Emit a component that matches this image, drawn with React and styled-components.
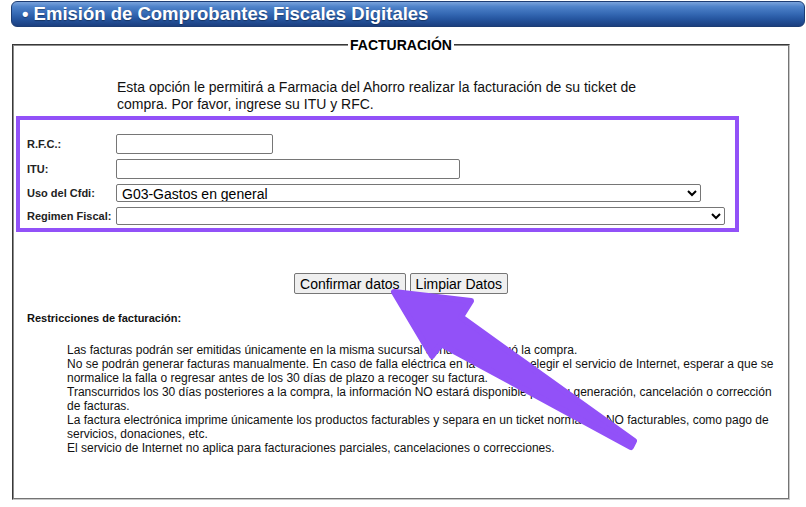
import React from 'react'
import styled, { createGlobalStyle } from 'styled-components'

const GlobalStyle = createGlobalStyle`
  body {
    margin: 0;
    background: #fff;
    font-family: "Liberation Sans", Arial, sans-serif;
    color: #000;
  }
`

const restricciones = [
  'Las facturas podrán ser emitidas únicamente en la misma sucursal donde se efectuó la compra.',
  'No se podrán generar facturas manualmente. En caso de falla eléctrica en la sucursal, elegir el servicio de Internet, esperar a que se normalice la falla o regresar antes de los 30 días de plazo a recoger su factura.',
  'Transcurridos los 30 días posteriores a la compra, la información NO estará disponible para su generación, cancelación o corrección de facturas.',
  'La factura electrónica imprime únicamente los productos facturables y separa en un ticket normal los NO facturables, como pago de servicios, donaciones, etc.',
  'El servicio de Internet no aplica para facturaciones parciales, cancelaciones o correcciones.'
]

function App() {
  return (
    <Page>
      <GlobalStyle />
      <TitleBar>• Emisión de Comprobantes Fiscales Digitales</TitleBar>

      <Box>
        <Legend>FACTURACIÓN</Legend>
        <Intro>
          Esta opción le permitirá a Farmacia del Ahorro realizar la facturación de su ticket de
          compra. Por favor, ingrese su ITU y RFC.
        </Intro>

        <Highlight>
          <Row>
            <Label>R.F.C.:</Label>
            <TextInput $w={157} type="text" />
          </Row>
          <Row>
            <Label>ITU:</Label>
            <TextInput $w={344} type="text" />
          </Row>
          <Row>
            <Label>Uso del Cfdi:</Label>
            <Select $w={585} defaultValue="G03">
              <option value="G03">G03-Gastos en general</option>
            </Select>
          </Row>
          <Row>
            <Label>Regimen Fiscal:</Label>
            <Select $w={609} defaultValue="">
              <option value=""></option>
            </Select>
          </Row>
        </Highlight>

        <Buttons>
          <Button type="button">Confirmar datos</Button>
          <Button type="button">Limpiar Datos</Button>
        </Buttons>

        <SubTitle>Restricciones de facturación:</SubTitle>
        <Rules>
          {restricciones.map((r) => (
            <Rule key={r}>{r}</Rule>
          ))}
        </Rules>
      </Box>

      <Arrow viewBox="0 0 806 507" width="806" height="507">
        <path
          d="M394 292 L471 301 L461 317 L634 441 L631 447 L441 344 L432 356 Z"
          fill="#9251f8"
          stroke="#9251f8"
          strokeWidth="6"
          strokeLinejoin="round"
        />
      </Arrow>
    </Page>
  )
}

const Page = styled.div`
  position: relative;
  width: 806px;
  height: 507px;
  overflow: hidden;
  padding-top: 1px;
  box-sizing: border-box;
`

const TitleBar = styled.div`
  margin: 0 1px 0 11px;
  height: 26px;
  box-sizing: border-box;
  border: 1px solid #1d3d74;
  border-radius: 6px;
  padding-left: 10px;
  display: flex;
  align-items: center;
  background: linear-gradient(
    to bottom,
    #7aa3dc 0%,
    #4e82c9 20%,
    #3468b3 50%,
    #2656a0 70%,
    #1b3f80 100%
  );
  color: #fff;
  font-size: 18.5px;
  font-weight: bold;
  text-shadow: 0 1px 1px rgba(0, 0, 0, 0.35);
`

const Box = styled.fieldset`
  margin: 10px 16px 0 12px;
  padding: 0 2px 43px;
  height: 463px;
  box-sizing: border-box;
  border: 2px groove #c0c0c0;
  border-color: #8c8c8c #c8c8c8 #c8c8c8 #8c8c8c;
  min-width: 0;
`

const Legend = styled.legend`
  margin: 0 auto;
  padding: 0 2px;
  font-size: 14px;
  font-weight: bold;
  line-height: 16px;
`

const Intro = styled.p`
  margin: 26px 0 0 101px;
  width: 540px;
  font-size: 14px;
  line-height: 17px;
  color: #111;
`

const Highlight = styled.div`
  margin-top: 3px;
  width: 723px;
  box-sizing: border-box;
  border: 4px solid #9251f8;
  padding: 14px 0 3px 7px;
  display: flex;
  flex-direction: column;
  gap: 5px;
`

const Row = styled.div`
  display: grid;
  grid-template-columns: 89px 1fr;
  align-items: center;
`

const Label = styled.span`
  font-size: 11px;
  font-weight: bold;
  color: #222;
`

const TextInput = styled.input`
  width: ${(p) => p.$w}px;
  height: 20px;
  box-sizing: border-box;
  border: 1px solid #767676;
  border-radius: 2px;
  padding: 1px 2px;
  font-family: "Liberation Sans", Arial, sans-serif;
  font-size: 13px;
`

const Select = styled.select`
  width: ${(p) => p.$w}px;
  height: 18px;
  box-sizing: border-box;
  border: 1px solid #767676;
  border-radius: 2px;
  padding: 0 1px;
  background: #fff;
  color: #000;
  font-family: "Liberation Sans", Arial, sans-serif;
  font-size: 14px;
`

const Buttons = styled.div`
  margin-top: 41px;
  display: flex;
  justify-content: center;
  gap: 4px;
`

const Button = styled.button`
  height: 21px;
  padding: 1px 5px;
  border: 1px solid #767676;
  border-radius: 2px;
  background: #efefef;
  color: #000;
  font-family: "Liberation Sans", Arial, sans-serif;
  font-size: 14px;
`

const SubTitle = styled.div`
  margin: 17px 0 0 11px;
  font-size: 11px;
  font-weight: bold;
  line-height: 14px;
  color: #111;
`

const Rules = styled.div`
  margin: 18px 0 0 51px;
  width: 712px;
  font-size: 12px;
  line-height: 14px;
  color: #111;
`

const Rule = styled.p`
  margin: 0;
`

const Arrow = styled.svg`
  position: absolute;
  top: 0;
  left: 0;
  pointer-events: none;
`

export default App
